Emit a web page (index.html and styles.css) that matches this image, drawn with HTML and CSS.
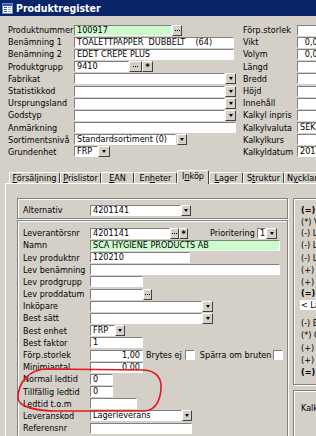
FILE: index.html
```html
<!DOCTYPE html>
<html lang="sv">
<head>
    <meta charset="UTF-8">
    <meta name="viewport" content="width=device-width, initial-scale=1.0">
    <title>Produktregister</title>
    <link rel="stylesheet" href="styles.css">
</head>
<body>
    <div class="window">
        <div class="titlebar">
            <svg class="appicon" width="11" height="11" viewBox="0 0 11 11">
                <rect x="0.5" y="0.5" width="10" height="10" fill="#fff" stroke="#6a8cc8"/>
                <rect x="1" y="1" width="9" height="2" fill="#2a5cc0"/>
                <rect x="2" y="4" width="3" height="1" fill="#2a5cc0"/>
                <rect x="6" y="4" width="3" height="1" fill="#9ab"/>
                <rect x="2" y="6" width="3" height="1" fill="#2a5cc0"/>
                <rect x="6" y="6" width="3" height="1" fill="#9ab"/>
                <rect x="2" y="8" width="3" height="1" fill="#2a5cc0"/>
                <rect x="6" y="8" width="3" height="1" fill="#9ab"/>
            </svg>
            <span>Produktregister</span>
        </div>

        <div class="head">
            <div class="form head-left">
                <label>Produktnummer</label>
                <div class="line"><div class="fld green w98">100917</div><div class="btn w10"><i class="dots"></i></div></div>
                <label>Benämning 1</label>
                <div class="line"><div class="fld w160">TOALETTPAPPER  DUBBELT    (64)</div></div>
                <label>Benämning 2</label>
                <div class="line"><div class="fld w160">EDET CREPE PLUS</div></div>
                <label>Produktgrupp</label>
                <div class="line"><div class="fld w55">9410</div><div class="btn w13"><i class="dots"></i></div><div class="btn w11"><b class="star">*</b></div></div>
                <label>Fabrikat</label>
                <div class="line"><div class="fld w151"></div><div class="btn w11"><i class="arrow"></i></div></div>
                <label>Statistikkod</label>
                <div class="line"><div class="fld w151"></div><div class="btn w11"><i class="arrow"></i></div></div>
                <label>Ursprungsland</label>
                <div class="line"><div class="fld w151"></div><div class="btn w11"><i class="arrow"></i></div></div>
                <label>Godstyp</label>
                <div class="line"><div class="fld w151"></div><div class="btn w11"><i class="arrow"></i></div></div>
                <label>Anmärkning</label>
                <div class="line"><div class="fld w162"></div></div>
                <label>Sortimentsnivå</label>
                <div class="line"><div class="fld w102">Standardsortiment (0)</div><div class="btn w10 ml1"><i class="arrow"></i></div></div>
                <label>Grundenhet</label>
                <div class="line"><div class="fld w24">FRP</div><div class="btn w12"><i class="arrow"></i></div></div>
            </div>

            <div class="form head-right">
                <label>Förp.storlek</label><div class="fld"></div>
                <label>Vikt</label><div class="fld num">0,000</div>
                <label>Volym</label><div class="fld num">0,000</div>
                <label>Längd</label><div class="fld"></div>
                <label>Bredd</label><div class="fld"></div>
                <label>Höjd</label><div class="fld"></div>
                <label>Innehåll</label><div class="fld"></div>
                <label>Kalkyl inpris</label><div class="fld"></div>
                <label>Kalkylvaluta</label><div class="fld">SEK</div>
                <label>Kalkylkurs</label><div class="fld"></div>
                <label>Kalkyldatum</label><div class="fld">2014-05-12</div>
            </div>
        </div>

        <div class="tabs">
            <div class="tab"><u>F</u>örsäljning</div>
            <div class="tab"><u>P</u>rislistor</div>
            <div class="tab"><u>E</u>AN</div>
            <div class="tab">En<u>h</u>eter</div>
            <div class="tab on">I<u>n</u>köp</div>
            <div class="tab"><u>L</u>ager</div>
            <div class="tab">S<u>t</u>ruktur</div>
            <div class="tab">N<u>y</u>cklar</div>
        </div>

        <div class="panel">
            <div class="left-col">
                <div class="grp alt">
                    <div class="row"><label class="lbl">Alternativ</label><div class="fld w91">4201141</div><div class="btn w10"><i class="arrow"></i></div></div>
                </div>
                <div class="grp lev">
                    <div class="row">
                        <label class="lbl">Leverantörsnr</label><div class="fld w80">4201141</div><div class="btn w9"><i class="dots"></i></div><div class="btn w9"><b class="star">*</b></div>
                        <label class="prio">Prioritering</label><div class="fld w9">1</div><div class="btn w11"><i class="arrow"></i></div>
                    </div>
                    <div class="row"><label class="lbl">Namn</label><div class="fld green w190">SCA HYGIENE PRODUCTS AB</div></div>
                    <div class="row"><label class="lbl">Lev produktnr</label><div class="fld w100">120210</div></div>
                    <div class="row"><label class="lbl">Lev benämning</label><div class="fld w190"></div></div>
                    <div class="row"><label class="lbl">Lev prodgrupp</label><div class="fld w53"></div></div>
                    <div class="row"><label class="lbl">Lev proddatum</label><div class="fld w53"></div><div class="btn w9"><i class="dots"></i></div></div>
                    <div class="row"><label class="lbl">Inköpare</label><div class="fld w112"></div><div class="btn w11"><i class="arrow"></i></div></div>
                    <div class="row"><label class="lbl">Best sätt</label><div class="fld w112"></div><div class="btn w11"><i class="arrow"></i></div></div>
                    <div class="row"><label class="lbl">Best enhet</label><div class="fld w25">FRP</div><div class="btn w10"><i class="arrow"></i></div></div>
                    <div class="row"><label class="lbl">Best faktor</label><div class="fld w53">1</div></div>
                    <div class="row">
                        <label class="lbl">Förp.storlek</label><div class="fld w53 num">1,00</div>
                        <label class="ml3">Brytes ej</label><div class="chk ml3"></div>
                        <label class="ml5">Spärra om bruten</label><div class="chk ml2"></div>
                    </div>
                    <div class="row"><label class="lbl">Minimiantal</label><div class="fld w53 num">0,00</div></div>
                    <div class="row"><label class="lbl">Normal ledtid</label><div class="fld w23">0</div></div>
                    <div class="row"><label class="lbl">Tillfällig ledtid</label><div class="fld w23">0</div></div>
                    <div class="row"><label class="lbl">Ledtid t.o.m</label><div class="fld w47"></div></div>
                    <div class="row"><label class="lbl">Leveranskod</label><div class="fld w92">Lagerleverans</div><div class="btn w10"><i class="arrow"></i></div></div>
                    <div class="row"><label class="lbl">Referensnr</label><div class="fld w102"></div></div>
                </div>
            </div>

            <div class="right-col">
                <div class="grp calc">
                    <div class="ln b">(=) Inköpspris</div>
                    <div class="ln">(*) Valuta</div>
                    <div class="ln">(-) Lev.rabatt 1</div>
                    <div class="ln">(-) Lev.rabatt 2</div>
                    <div class="ln gap">(-) Lev.rabatt 3</div>
                    <div class="ln">(+) Frakt</div>
                    <div class="ln">(+) Tull</div>
                    <div class="ln b">(=) Nettopris</div>
                    <div class="pick">&lt; Lägg till &gt;</div>
                    <div class="ln2 first">(-) Extra</div>
                    <div class="ln2">(*) Omräkning</div>
                    <div class="ln2">(+) Påslag</div>
                    <div class="ln2">(+) Avgift</div>
                    <div class="ln2 b">(=) Kalkylpris</div>
                </div>
                <div class="grp kalk">
                    <div class="ln">Kalkylpris</div>
                </div>
            </div>
        </div>

        <svg class="ring" width="148" height="48" viewBox="0 0 148 48">
            <path d="M30,2 L125,3 C138,3 144,10 144,19 C144,31 140,43 128,44 L40,44 C20,44 1,40 1,31 C1,16 12,2 30,2 Z" fill="none" stroke="#e8141c" stroke-width="1.6"/>
        </svg>
    </div>
</body>
</html>
```

FILE: styles.css
```css
body {
    margin: 0;
    background: #d4d0c8;
    font-family: "DejaVu Sans Condensed", "DejaVu Sans", sans-serif;
    font-stretch: condensed;
    font-size: 9px;
    color: #000;
    overflow: hidden;
}
.window {
    position: relative;
    width: 316px;
    height: 436px;
    display: flex;
    flex-direction: column;
    overflow: hidden;
}
.titlebar {
    flex: none;
    height: 16px;
    background: #0a246a;
    color: #fff;
    font-size: 10.5px;
    font-weight: bold;
    display: flex;
    align-items: center;
    gap: 3px;
    padding-left: 2px;
}
.appicon {
    flex: none;
}

/* top part of the form */
.head {
    flex: none;
    display: flex;
    padding: 8px 0 0 8px;
}
.form {
    flex: none;
    display: grid;
    grid-auto-rows: 12.2px;
    align-items: center;
}
.head-left {
    grid-template-columns: 66px 1fr;
    width: 235px;
}
.head-right {
    grid-template-columns: 54px 34px;
}
.line {
    display: flex;
    align-items: center;
}
label {
    white-space: nowrap;
}

/* fields and buttons */
.fld {
    box-sizing: border-box;
    height: 11px;
    background: #fff;
    border: 1px solid;
    border-color: #808080 #fff #fff #808080;
    padding: 0 2px;
    line-height: 9px;
    white-space: pre;
    overflow: hidden;
    flex: none;
}
.fld.green {
    background: #ccfccc;
}
.fld.num {
    text-align: right;
}
.btn {
    box-sizing: border-box;
    height: 11px;
    background: #d4d0c8;
    border: 1px solid;
    border-color: #fff #404040 #404040 #fff;
    display: flex;
    align-items: center;
    justify-content: center;
    flex: none;
}
.arrow {
    width: 0;
    height: 0;
    border-left: 2.5px solid transparent;
    border-right: 2.5px solid transparent;
    border-top: 3px solid #000;
}
.dots {
    width: 5px;
    height: 1px;
    background: repeating-linear-gradient(90deg, #000 0 1px, transparent 1px 2px);
}
.star {
    font-size: 9px;
    line-height: 9px;
    margin-top: 2px;
}
.chk {
    box-sizing: border-box;
    width: 10px;
    height: 10px;
    background: #fff;
    border: 1px solid;
    border-color: #808080 #fff #fff #808080;
    flex: none;
}

.w9 { width: 9px; }
.w10 { width: 10px; }
.w11 { width: 11px; }
.w12 { width: 12px; }
.w13 { width: 13px; }
.w23 { width: 23px; }
.w24 { width: 24px; }
.w25 { width: 25px; }
.w47 { width: 47px; }
.w53 { width: 53px; }
.w55 { width: 55px; }
.w80 { width: 80px; }
.w91 { width: 91px; }
.w92 { width: 92px; }
.w98 { width: 98px; }
.w100 { width: 100px; }
.w102 { width: 102px; }
.w112 { width: 112px; }
.w151 { width: 151px; }
.w160 { width: 160px; }
.w162 { width: 162px; }
.w190 { width: 190px; }
.ml1 { margin-left: 1px; }
.ml2 { margin-left: 2px; }
.ml3 { margin-left: 3px; }
.ml5 { margin-left: 5px; }

/* tabs */
.tabs {
    flex: none;
    display: flex;
    align-items: flex-end;
    height: 13px;
    margin: 12px 0 0 9px;
    position: relative;
    z-index: 1;
}
.tab {
    box-sizing: border-box;
    flex: none;
    height: 11px;
    border: 1px solid #fff;
    border-right-color: #404040;
    border-bottom: none;
    border-radius: 2px 2px 0 0;
    text-align: center;
    line-height: 10px;
    white-space: nowrap;
    overflow: hidden;
}
.tab.on {
    height: 14px;
    margin-bottom: -1px;
    background: #d4d0c8;
    line-height: 11px;
}
.tab:nth-child(1) { width: 51px; }
.tab:nth-child(2) { width: 41px; }
.tab:nth-child(3) { width: 33px; }
.tab:nth-child(4) { width: 43px; }
.tab:nth-child(5) { width: 32px; }
.tab:nth-child(6) { width: 34px; }
.tab:nth-child(7) { width: 41px; }
.tab:nth-child(8) {
    width: 44px;
    text-align: left;
    padding-left: 2px;
}

/* tab page */
.panel {
    flex: 1;
    min-height: 0;
    display: flex;
    margin-left: 5px;
    border-top: 1px solid #fff;
    border-left: 1px solid #fff;
    padding: 14px 0 0 11px;
}
.grp {
    box-sizing: border-box;
    border: 1px solid #808080;
    box-shadow: inset 1px 1px 0 #fff, 1px 1px 0 #fff;
}
.left-col {
    flex: none;
    width: 271px;
    display: flex;
    flex-direction: column;
}
.alt {
    height: 21px;
    padding: 5px 0 0 5px;
}
.lev {
    flex: 1;
    margin-top: 1px;
    padding: 6px 0 0 5px;
    border-bottom: none;
}
.row {
    display: flex;
    align-items: center;
    height: 12.2px;
}
.lbl {
    width: 67px;
    flex: none;
}
.prio {
    width: 47px;
    margin-left: 22px;
    flex: none;
}

/* calculation column */
.right-col {
    flex: none;
    width: 60px;
    margin-left: 5px;
}
.calc {
    height: 187px;
    padding: 6px 0 0 7px;
}
.ln {
    height: 11.6px;
    line-height: 11.6px;
    white-space: nowrap;
}
.ln.gap {
    margin-top: 2px;
}
.ln2 {
    height: 12.4px;
    line-height: 12.4px;
    white-space: nowrap;
}
.ln2.first {
    margin-top: 7px;
}
.b {
    font-weight: bold;
}
.pick {
    height: 10px;
    line-height: 10px;
    margin-left: -1px;
    padding-left: 1px;
    background: #fff;
    white-space: nowrap;
}
.kalk {
    margin-top: 5px;
    height: 60px;
    padding: 12px 0 0 7px;
}

.ring {
    position: absolute;
    left: 17px;
    top: 367px;
}
```
